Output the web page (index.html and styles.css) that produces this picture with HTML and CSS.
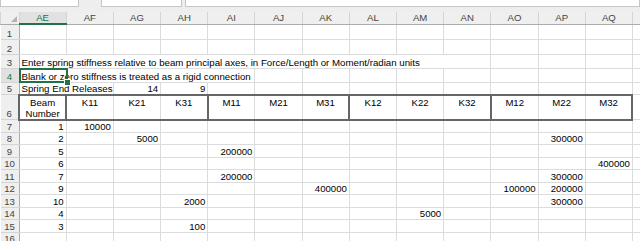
FILE: index.html
```html
<!DOCTYPE html>
<html>
<head>
<meta charset="utf-8">
<link rel="stylesheet" href="styles.css">
</head>
<body>
<div class="toolbar">
  <div class="box namebox"></div>
  <div class="box fxbox"></div>
  <div class="box formula"></div>
</div>
<table class="sheet">
  <colgroup>
    <col class="rh">
    <col class="c"><col class="c"><col class="c"><col class="c"><col class="c"><col class="c"><col class="c">
    <col class="c"><col class="c"><col class="c"><col class="c"><col class="c"><col class="c"><col class="c">
  </colgroup>
  <thead>
    <tr class="hr">
      <th class="corner"><span class="tri"></span></th>
      <th class="ch sel">AE</th><th class="ch">AF</th><th class="ch">AG</th><th class="ch">AH</th><th class="ch">AI</th><th class="ch">AJ</th><th class="ch">AK</th><th class="ch">AL</th><th class="ch">AM</th><th class="ch">AN</th><th class="ch">AO</th><th class="ch">AP</th><th class="ch">AQ</th><th class="ch"></th>
    </tr>
  </thead>
  <tbody>
    <tr class="r15"><th>1</th><td></td><td></td><td></td><td></td><td></td><td></td><td></td><td></td><td></td><td></td><td></td><td></td><td></td><td></td></tr>
    <tr class="r15"><th>2</th><td></td><td></td><td></td><td></td><td></td><td></td><td></td><td></td><td></td><td></td><td></td><td></td><td></td><td></td></tr>
    <tr class="r14"><th>3</th><td class="t" colspan="10">Enter spring stiffness relative to beam principal axes, in Force/Length or Moment/radian units</td><td></td><td></td><td></td><td></td></tr>
    <tr class="r14"><th class="rsel">4</th><td class="t sc" colspan="5">Blank or zero stiffness is treated as a rigid connection<span class="selbox"></span><span class="handle"></span></td><td></td><td></td><td></td><td></td><td></td><td></td><td></td><td></td><td></td></tr>
    <tr class="r12"><th>5</th><td class="t" colspan="2">Spring End Releases</td><td>14</td><td>9</td><td></td><td></td><td></td><td></td><td></td><td></td><td></td><td></td><td></td><td></td></tr>
    <tr class="r24 hd">
      <th class="rh6">6</th>
      <td class="gl gr">Beam<br>Number</td>
      <td class="gl">K11</td><td>K21</td><td class="gr">K31</td>
      <td class="gl">M11</td><td>M21</td><td class="gr">M31</td>
      <td class="gl">K12</td><td>K22</td><td class="gr">K32</td>
      <td class="gl">M12</td><td>M22</td><td class="gr">M32</td>
      <td class="plain"></td>
    </tr>
    <tr class="rd"><th>7</th><td>1</td><td>10000</td><td></td><td></td><td></td><td></td><td></td><td></td><td></td><td></td><td></td><td></td><td></td><td></td></tr>
    <tr class="rd"><th>8</th><td>2</td><td></td><td>5000</td><td></td><td></td><td></td><td></td><td></td><td></td><td></td><td></td><td>300000</td><td></td><td></td></tr>
    <tr class="rd"><th>9</th><td>5</td><td></td><td></td><td></td><td>200000</td><td></td><td></td><td></td><td></td><td></td><td></td><td></td><td></td><td></td></tr>
    <tr class="rd"><th>10</th><td>6</td><td></td><td></td><td></td><td></td><td></td><td></td><td></td><td></td><td></td><td></td><td></td><td>400000</td><td></td></tr>
    <tr class="rd"><th>11</th><td>7</td><td></td><td></td><td></td><td>200000</td><td></td><td></td><td></td><td></td><td></td><td></td><td>300000</td><td></td><td></td></tr>
    <tr class="rd"><th>12</th><td>9</td><td></td><td></td><td></td><td></td><td></td><td>400000</td><td></td><td></td><td></td><td>100000</td><td>200000</td><td></td><td></td></tr>
    <tr class="rd"><th>13</th><td>10</td><td></td><td></td><td>2000</td><td></td><td></td><td></td><td></td><td></td><td></td><td></td><td>300000</td><td></td><td></td></tr>
    <tr class="rd"><th>14</th><td>4</td><td></td><td></td><td></td><td></td><td></td><td></td><td></td><td>5000</td><td></td><td></td><td></td><td></td><td></td></tr>
    <tr class="rd"><th>15</th><td>3</td><td></td><td></td><td>100</td><td></td><td></td><td></td><td></td><td></td><td></td><td></td><td></td><td></td><td></td></tr>
    <tr class="rd"><th>16</th><td></td><td></td><td></td><td></td><td></td><td></td><td></td><td></td><td></td><td></td><td></td><td></td><td></td><td></td></tr>
  </tbody>
</table>
</body>
</html>
```

FILE: styles.css
```css
html, body {
  margin: 0;
  padding: 0;
  background: #ffffff;
  overflow: hidden;
}
body {
  width: 640px;
  height: 241px;
  font-family: "Liberation Sans", Arial, sans-serif;
  font-size: 9.6px;
  color: #000;
}
.toolbar {
  height: 12px;
  background: #eeeeee;
  display: flex;
  align-items: flex-start;
  box-sizing: border-box;
}
.box {
  height: 7px;
  background: #ffffff;
  border: 1px solid #c6c6c6;
  border-top: none;
  box-sizing: border-box;
}
.namebox { width: 79px; }
.fxbox { width: 81px; margin-left: 22px; }
.formula { flex: 1; margin-left: 3px; }

.sheet {
  border-collapse: collapse;
  table-layout: fixed;
  width: 679px;
}
col.rh { width: 18.5px; }
col.c { width: 47.2px; }

th, td {
  padding: 0 2px;
  border: 1px solid #dadcdd;
  white-space: nowrap;
  overflow: hidden;
  line-height: 11px;
  vertical-align: bottom;
  font-size: 9.6px;
}
td { text-align: right; color: #000; }
td.t { text-align: left; overflow: visible; font-size: 9.7px; }

th {
  background: #efefef;
  color: #444;
  font-weight: normal;
  text-align: center;
  padding: 0;
}
tbody th { border-right-color: #ababab; border-top-color: #d4d4d4; border-bottom-color: #d4d4d4; border-left: none; }
thead th { border-bottom-color: #ababab; border-left-color: #d4d4d4; border-right-color: #d4d4d4; border-top: none; vertical-align: middle; }

.hr { height: 12px; }
.r15 { height: 15px; }
.r14 { height: 14px; }
.r12 { height: 12px; }
.r24 { height: 24px; }
.rd { height: 12.5px; }

.corner { position: relative; }
.tri {
  position: absolute;
  right: 2px;
  bottom: 2px;
  width: 0;
  height: 0;
  border-left: 6px solid transparent;
  border-bottom: 6px solid #b4b4b4;
}
th.sel {
  background: #e1e1e1;
  color: #217346;
  border-bottom: 2px solid #217346;
}
th.rsel {
  background: #e1e1e1;
  color: #217346;
}

td.sc { position: relative; }
.selbox {
  position: absolute;
  left: -1px;
  top: -1px;
  width: 49px;
  height: 15px;
  border: 2px solid #217346;
  box-sizing: border-box;
}
.handle {
  position: absolute;
  left: 44px;
  top: 10px;
  width: 5px;
  height: 5px;
  background: #217346;
  border: 1px solid #fff;
}

.hd td {
  text-align: center;
  vertical-align: top;
  white-space: normal;
  border-top: 2px solid #666;
  border-bottom: 2px solid #666;
  padding-top: 1px;
}
.hd td.plain {
  border-top: 1px solid #dadcdd;
  border-bottom: 1px solid #dadcdd;
}
.hd td.gl { border-left: 2px solid #666; }
.hd td.gr { border-right: 2px solid #666; }
.hd th { vertical-align: bottom; }
```
